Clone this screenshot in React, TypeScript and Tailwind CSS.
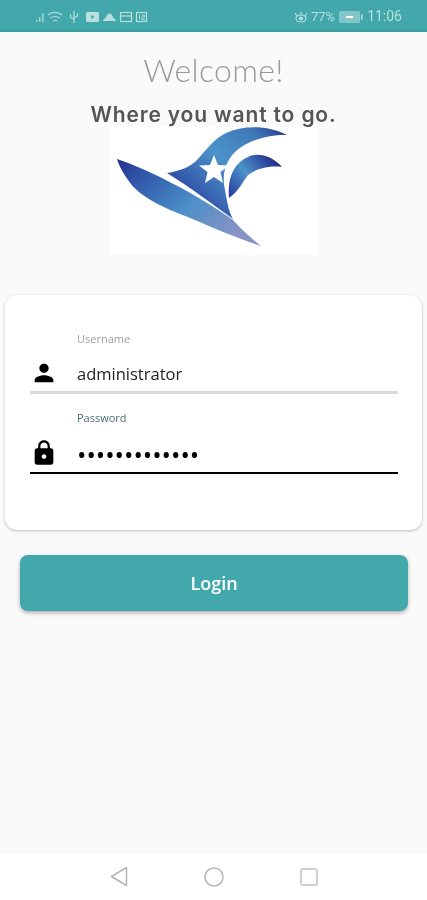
function StatusIcons() {
  return (
    <svg width="116" height="14" viewBox="0 0 116 14" className="text-[#b9dfe0]">
      {/* signal */}
      <path d="M1 12h1.500v-2H1zM4 12h1.500V7H4zM7 12h1.500V3H7z" fill="currentColor" opacity="0.8" />
      {/* wifi */}
      <path d="M13 5c4-3.500 10-3.500 14 0M15.500 8c2.500-2 6.500-2 9 0M18 11c1.200-.9 2.800-.9 4 0" fill="none" stroke="currentColor" strokeWidth="1.200" />
      {/* usb */}
      <path d="M39 1v12M35.500 4v3.500L39 9.500M42.500 3.500V6L39 8" fill="none" stroke="currentColor" strokeWidth="1.200" />
      {/* video */}
      <rect x="51" y="2" width="13" height="10" rx="1.500" fill="currentColor" />
      <path d="M56 5l3.500 2-3.500 2z" fill="#42a8ac" />
      {/* cloud */}
      <path d="M68 11c0-1.500 1-2.500 2.500-2.800C71.500 5.500 73 3.500 74.500 3.500S77.500 5.500 78.500 8.200C80 8.500 81 9.500 81 11z" fill="currentColor" />
      {/* card */}
      <rect x="85.500" y="2.500" width="11" height="9" fill="none" stroke="currentColor" strokeWidth="1.200" />
      <path d="M85.500 6h11" stroke="currentColor" strokeWidth="1.200" />
      {/* calendar */}
      <rect x="101.500" y="2.500" width="10" height="9" fill="none" stroke="currentColor" strokeWidth="1.200" />
      <path d="M104.500 4.500v5M107 5h2.500v2H107v2.500h3" fill="none" stroke="currentColor" strokeWidth="1" />
    </svg>
  );
}

function Logo() {
  return (
    <svg width="208" height="128" viewBox="110 127 208 128">
      <defs>
        <linearGradient id="wing" x1="0" y1="0" x2="1" y2="0.6">
          <stop offset="0" stopColor="#24308f" />
          <stop offset="0.2" stopColor="#2f55a8" />
          <stop offset="0.6" stopColor="#4c90c8" />
          <stop offset="1" stopColor="#8a94c4" />
        </linearGradient>
        <linearGradient id="sail" x1="0" y1="0.8" x2="1" y2="0">
          <stop offset="0" stopColor="#26349a" />
          <stop offset="0.5" stopColor="#4b93ca" />
          <stop offset="0.8" stopColor="#3f78b8" />
          <stop offset="1" stopColor="#26308f" />
        </linearGradient>
        <linearGradient id="small" x1="0" y1="1" x2="1" y2="0.3">
          <stop offset="0" stopColor="#26349a" />
          <stop offset="0.5" stopColor="#4b93ca" />
          <stop offset="1" stopColor="#222c8c" />
        </linearGradient>
      </defs>
      <path d="M117 159 C150 170 200 196 233 220 C243 231 252 239 261 246 C236 238 214 228 190 218 C165 208 140 198 128 180 C123 173 119 166 117 159Z" fill="url(#wing)" />
      <path d="M167 173 C180 171 190 167 197 160 C207 149 215 138 226 133 C243 125 268 125 287 135 C268 134 247 141 235 152 C224 163 222 178 225 190 C227 202 229 212 233 219 C212 204 190 187 167 173Z" fill="url(#sail)" />
      <path d="M282 167 C272 156 258 152 248 157 C234 163 227 178 229 198 C240 190 243 181 248 175 C254 170 268 165 282 167Z" fill="url(#small)" />
      <path d="M214 155 L218 165 L229 165.500 L220.500 172 L223 183 L214 177 L205 183 L207.500 172 L199 165.500 L210 165Z" fill="#ffffff" />
    </svg>
  );
}

function UserIcon() {
  return (
    <svg width="28" height="28" viewBox="0 0 24 24" fill="#000000">
      <path d="M12 12c2.210 0 4-1.790 4-4s-1.790-4-4-4-4 1.790-4 4 1.790 4 4 4zm0 2c-2.670 0-8 1.340-8 4v2h16v-2c0-2.660-5.330-4-8-4z" />
    </svg>
  );
}

function LockIcon() {
  return (
    <svg width="28" height="28" viewBox="0 0 24 24" fill="#000000">
      <path d="M18 8h-1V6c0-2.760-2.240-5-5-5S7 3.240 7 6v2H6c-1.100 0-2 .9-2 2v10c0 1.100.9 2 2 2h12c1.100 0 2-.9 2-2V10c0-1.100-.9-2-2-2zm-6 9c-1.100 0-2-.9-2-2s.9-2 2-2 2 .9 2 2-.9 2-2 2zm3.100-9H8.900V6c0-1.710 1.390-3.100 3.100-3.100 1.710 0 3.100 1.390 3.100 3.100v2z" />
    </svg>
  );
}

export default function App() {
  return (
    <div className="w-[427px] h-[900px] flex flex-col overflow-hidden bg-[#fafafa] blur-[0.4px] font-['Open_Sans',sans-serif]">
      {/* status bar */}
      <div className="h-[32px] shrink-0 bg-[#42a8ac] border-b-2 border-[#3a9ca0] pt-[3px] pl-[35px] pr-[25px] flex items-center justify-between text-[#b9dfe0]">
        <StatusIcons />
        <div className="flex items-center text-[13px] font-['Roboto',sans-serif]">
          <svg width="14" height="14" viewBox="0 0 14 14" fill="none" stroke="currentColor" strokeWidth="1.200" className="mr-[3px]">
            <path d="M1 3l2 3M13 3l-2 3M7 2v3" />
            <ellipse cx="7" cy="8.500" rx="5" ry="3.500" />
            <circle cx="7" cy="8.500" r="1.500" fill="currentColor" />
          </svg>
          <span>77%</span>
          <svg width="24" height="12" viewBox="0 0 24 12" className="mx-[4px]">
            <rect x="0" y="0" width="21" height="12" rx="1.500" fill="currentColor" opacity="0.55" />
            <rect x="22" y="3.500" width="1.500" height="5" fill="currentColor" />
            <path d="M7 6h7" stroke="#ffffff" strokeWidth="2" />
          </svg>
          <span className="text-[14px]">11:06</span>
        </div>
      </div>

      <div className="flex-1 flex flex-col">
        {/* header */}
        <div className="flex flex-col items-center">
          <div className="mt-[15px] h-[46px] leading-[46px] text-[32px] font-light tracking-[0.3px] text-[#9a9a9a] font-['Lato',sans-serif]">Welcome!</div>
          <div className="mt-[10px] h-[24px] leading-[24px] text-[21px] font-semibold text-[#555555] tracking-[0.850px] font-['Inter',sans-serif]">Where you want to go.</div>
          <div className="bg-white h-[128px]">
            <Logo />
          </div>
        </div>

        {/* login card */}
        <div className="mt-[40px] mx-[5px] h-[235px] bg-white rounded-[12px] shadow-[0_1px_3px_rgba(0,0,0,0.25)] pl-[25px] pr-[24px] pt-[36px]">
          <div className="h-[63px] border-b-[3px] border-[#dadada] flex">
            <div className="w-[47px] shrink-0 pt-[28px]"><UserIcon /></div>
            <div>
              <div className="text-[11px] leading-[15px] text-[#9aa0a6]">Username</div>
              <div className="mt-[17px] text-[16.500px] leading-[22px] text-[#222222]">administrator</div>
            </div>
          </div>
          <div className="mt-[16px] h-[64px] border-b-2 border-black flex">
            <div className="w-[47px] shrink-0 pt-[29px]"><LockIcon /></div>
            <div>
              <div className="text-[11px] leading-[15px] text-[#4f6f6f]">Password</div>
              <div className="mt-[18px] text-[25px] leading-[22px] text-black">•••••••••••••</div>
            </div>
          </div>
        </div>

        <button className="mt-[25px] ml-[20px] mr-[19px] h-[56px] bg-[#42a8ac] rounded-[8px] shadow-[0_2px_4px_rgba(0,0,0,0.3)] text-white text-[18px] font-semibold">
          Login
        </button>
      </div>

      {/* nav bar */}
      <div className="h-[45px] shrink-0 bg-white flex items-center pb-[2px] pl-[110px] pr-[109px] justify-between">
        <svg width="18" height="21" viewBox="0 0 18 21" fill="none" stroke="#b5b5b5" strokeWidth="1.500" strokeLinejoin="round">
          <path d="M16.500 1.500V19.500L1.500 10.500Z" />
        </svg>
        <svg width="20" height="20" viewBox="0 0 20 20" fill="none" stroke="#b5b5b5" strokeWidth="1.500">
          <circle cx="10" cy="10" r="9" />
        </svg>
        <svg width="18" height="18" viewBox="0 0 18 18" fill="none" stroke="#d0d0d0" strokeWidth="2">
          <rect x="1" y="1" width="16" height="16" rx="2" />
        </svg>
      </div>
    </div>
  );
}
